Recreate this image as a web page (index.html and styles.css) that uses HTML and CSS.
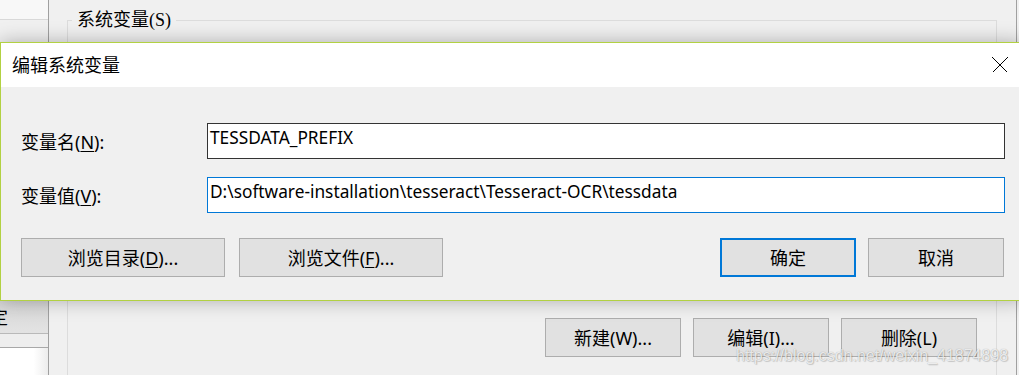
FILE: index.html
```html
<!DOCTYPE html>
<html lang="zh-CN">
<head>
<meta charset="utf-8">
<title>编辑系统变量</title>
<link rel="stylesheet" href="styles.css">
</head>
<body>
<div class="screen">
  <div class="bgwin">
    <div class="side">
      <div class="side-top"></div>
      <div class="side-mid"></div>
      <div class="side-btn"><span>定</span></div>
      <div class="side-strip"></div>
      <div class="side-list"></div>
    </div>
    <div class="main">
      <fieldset class="group">
        <legend>系统变量(S)</legend>
        <div class="group-actions">
          <button class="btn std">新建(W)...</button>
          <button class="btn std">编辑(I)...</button>
          <button class="btn std">删除(L)</button>
        </div>
      </fieldset>
    </div>
    <div class="edge"></div>
  </div>

  <div class="dialog">
    <div class="titlebar">
      <span class="title">编辑系统变量</span>
      <svg class="close" viewBox="0 0 16 16" width="16" height="16" aria-label="关闭">
        <path d="M0.5 0.5 L15.5 15.5 M15.5 0.5 L0.5 15.5" stroke="#000" stroke-width="1" fill="none"/>
      </svg>
    </div>
    <div class="dlg-body">
      <div class="field-row">
        <span class="label">变量名(<u>N</u>):</span>
        <div class="field">TESSDATA_PREFIX</div>
      </div>
      <div class="field-row">
        <span class="label">变量值(<u>V</u>):</span>
        <div class="field focus">D:\software-installation\tesseract\Tesseract-OCR\tessdata</div>
      </div>
      <div class="dlg-actions">
        <div class="left-btns">
          <button class="btn wide">浏览目录(<u>D</u>)...</button>
          <button class="btn wide">浏览文件(<u>F</u>)...</button>
        </div>
        <div class="right-btns">
          <button class="btn std default">确定</button>
          <button class="btn std">取消</button>
        </div>
      </div>
    </div>
  </div>

  <div class="watermark">https://blog.csdn.net/weixin_41874898</div>
</div>
</body>
</html>
```
FILE: styles.css
```css
html, body {
  margin: 0;
  padding: 0;
  background: #f0f0f0;
}

.screen {
  position: relative;
  width: 1019px;
  height: 375px;
  overflow: hidden;
  background: #f0f0f0;
  font-family: "Noto Sans", "Noto Sans CJK SC", sans-serif;
  color: #000;
}

/* ---------- background window ---------- */
.bgwin {
  display: flex;
  height: 375px;
}

.side {
  width: 48px;
  flex: none;
  border-right: 1px solid #a0a0a0;
  display: flex;
  flex-direction: column;
  overflow: hidden;
}
.side-top {
  height: 19px;
  flex: none;
  background: #f8f8f8;
  border-bottom: 1px solid #d9d9d9;
}
.side-mid {
  height: 280px;
  flex: none;
  background: #f0f0f0;
}
.side-btn {
  height: 33px;
  flex: none;
  background: linear-gradient(#d6d6d6, #e3e3e3);
  border-bottom: 1px solid #b9b9b9;
  display: flex;
  align-items: center;
  font-size: 18px;
  line-height: 24px;
}
.side-btn span {
  margin-left: -10px;
}
.side-strip {
  height: 13px;
  flex: none;
  background: #eeeeee;
  border-bottom: 1px solid #a8a8a8;
}
.side-list {
  flex: 1;
  background: linear-gradient(to right, #ffffff 70%, #ececec);
}

.main {
  flex: 1;
  padding: 8px 19px 0 18px;
  min-width: 0;
}

.group {
  margin: 0;
  padding: 0;
  border: 1px solid #dcdcdc;
  height: 400px;
}
.group legend {
  margin-left: 4px;
  padding: 0 5px;
  font-family: "Liberation Serif", "Noto Sans CJK SC", serif;
  font-size: 18px;
  line-height: 24px;
}
.group-actions {
  display: flex;
  justify-content: flex-end;
  gap: 12px;
  padding: 286px 19px 0 0;
}

.edge {
  width: 2px;
  flex: none;
  border-left: 1px solid #a0a0a0;
  background: #f0f0f0;
}

/* ---------- buttons ---------- */
.btn {
  height: 39px;
  box-sizing: border-box;
  border: 1px solid #adadad;
  background: #e1e1e1;
  color: #000;
  padding: 0;
  margin: 0;
  font-family: "Noto Sans", "Noto Sans CJK SC", sans-serif;
  font-size: 18px;
  line-height: 24px;
  white-space: nowrap;
}
.btn.std { width: 136px; }
.btn.wide { width: 204px; }
.btn.default { border: 2px solid #0078d7; }
.btn u { text-underline-offset: 2px; }

/* ---------- dialog ---------- */
.dialog {
  position: absolute;
  left: 0;
  top: 42px;
  width: 1024px;
  height: 259px;
  box-sizing: border-box;
  border: 1px solid #b2d142;
  background: #f0f0f0;
  box-shadow: 0 0 18px rgba(0, 0, 0, 0.28);
  display: flex;
  flex-direction: column;
}

.titlebar {
  height: 44px;
  flex: none;
  background: #ffffff;
  display: flex;
  align-items: center;
  padding-left: 11px;
}
.title {
  font-size: 18px;
  line-height: 24px;
}
.close {
  margin-left: auto;
  margin-right: 15px;
  shape-rendering: crispEdges;
}

.dlg-body {
  padding: 36px 18px 0 20px;
  display: flex;
  flex-direction: column;
}

.field-row {
  display: grid;
  grid-template-columns: 186px 1fr;
  align-items: center;
}
.field-row + .field-row {
  margin-top: 18px;
}
.label {
  font-size: 18px;
  line-height: 24px;
  padding-top: 2px;
}
.label u { text-underline-offset: 2px; }

.field {
  height: 36px;
  box-sizing: border-box;
  border: 1px solid #333333;
  background: #ffffff;
  padding: 2px 2px 0;
  font-family: "Noto Sans", sans-serif;
  font-size: 17.3px;
  line-height: 24px;
  white-space: nowrap;
  overflow: hidden;
}
.field.focus {
  border-color: #0078d7;
}

.dlg-actions {
  display: flex;
  margin-top: 25px;
}
.left-btns {
  display: flex;
  gap: 14px;
}
.right-btns {
  display: flex;
  gap: 12px;
  margin-left: auto;
  margin-right: 1px;
}

/* ---------- watermark ---------- */
.watermark {
  position: absolute;
  left: 736px;
  top: 347px;
  font-family: "Liberation Sans", sans-serif;
  font-size: 16px;
  line-height: 18px;
  color: rgba(255, 255, 255, 0.8);
  text-shadow: 0 0 1px rgba(0, 0, 0, 0.35), 1px 1px 1px rgba(0, 0, 0, 0.15);
  white-space: nowrap;
}
```
